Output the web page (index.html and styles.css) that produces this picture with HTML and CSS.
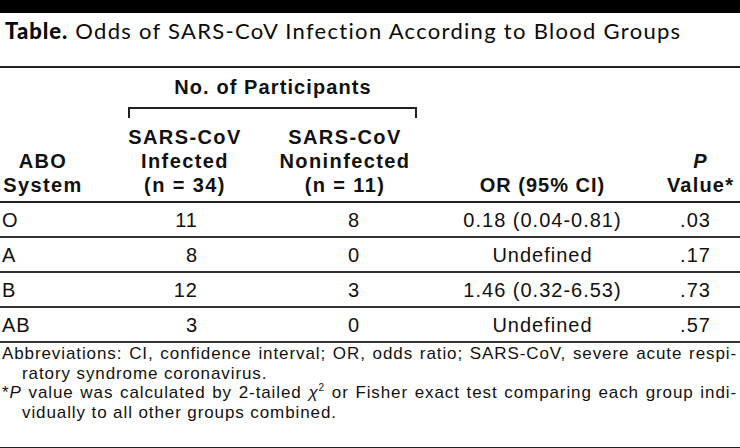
FILE: index.html
```html
<!DOCTYPE html>
<html lang="en">
<head>
<meta charset="utf-8">
<title>Table</title>
<link rel="stylesheet" href="styles.css">
</head>
<body>
<div class="page">
  <div class="topbar"></div>
  <h1 class="title"><b class="title-label">Table.</b> Odds of SARS-CoV Infection According to Blood Groups</h1>
  <table class="data">
    <colgroup>
      <col class="c1"><col class="c2"><col class="c3"><col class="c4"><col class="c5">
    </colgroup>
    <thead>
      <tr class="group-row">
        <th></th>
        <th colspan="2" class="group-cell">
          <div class="group-label">No. of Participants</div>
          <div class="bracket"></div>
        </th>
        <th></th>
        <th></th>
      </tr>
      <tr class="head-row">
        <th class="h-abo">ABO<br>System</th>
        <th class="h-mid">SARS-CoV<br>Infected<br>(n = 34)</th>
        <th class="h-mid">SARS-CoV<br>Noninfected<br>(n = 11)</th>
        <th class="h-or">OR (95% CI)</th>
        <th class="h-p"><i>P</i><br>Value*</th>
      </tr>
    </thead>
    <tbody>
      <tr><td class="d-abo">O</td><td class="d-inf">11</td><td class="d-non">8</td><td class="d-or">0.18 (0.04-0.81)</td><td class="d-p">.03</td></tr>
      <tr><td class="d-abo">A</td><td class="d-inf">8</td><td class="d-non">0</td><td class="d-or">Undefined</td><td class="d-p">.17</td></tr>
      <tr><td class="d-abo">B</td><td class="d-inf">12</td><td class="d-non">3</td><td class="d-or">1.46 (0.32-6.53)</td><td class="d-p">.73</td></tr>
      <tr><td class="d-abo">AB</td><td class="d-inf">3</td><td class="d-non">0</td><td class="d-or">Undefined</td><td class="d-p">.57</td></tr>
    </tbody>
  </table>
  <div class="notes">
    <p class="note">
      <span class="line first">Abbreviations: CI, confidence interval; OR, odds ratio; SARS-CoV, severe acute respi-</span>
      <span class="line">ratory syndrome coronavirus.</span>
    </p>
    <p class="note">
      <span class="line first">*<i>P</i> value was calculated by 2-tailed <i>χ</i><sup class="sq">2</sup> or Fisher exact test comparing each group indi-</span>
      <span class="line">vidually to all other groups combined.</span>
    </p>
  </div>
</div>
</body>
</html>
```

FILE: styles.css
```css
html, body {
  margin: 0;
  padding: 0;
  background: #fff;
}

.page {
  width: 740px;
  height: 448px;
  overflow: hidden;
  color: #111;
  font-family: "Liberation Sans", Arial, sans-serif;
}

.topbar {
  height: 13px;
  background: #000;
}

.title {
  margin: 0;
  box-sizing: border-box;
  height: 55px;
  padding: 5px 0 0 5px;
  border-bottom: 2px solid #222;
  font-family: Lato, "Open Sans", sans-serif;
  font-weight: 400;
  font-size: 22px;
  line-height: 26px;
  letter-spacing: 1.3px;
  color: #0a0a0a;
}

.title-label {
  font-weight: 900;
  letter-spacing: 1px;
}

.data {
  width: 740px;
  border-collapse: collapse;
  table-layout: fixed;
}

.c1 { width: 120px; }
.c2 { width: 130px; }
.c3 { width: 190px; }
.c4 { width: 205px; }
.c5 { width: 95px; }

.data th {
  padding: 0;
  font-weight: 700;
  font-size: 20px;
  line-height: 24px;
  letter-spacing: 1.4px;
  text-align: center;
  vertical-align: bottom;
}

.data .group-cell {
  padding-top: 7px;
}

.group-label {
  letter-spacing: 1.1px;
  padding-right: 14px;
}

.bracket {
  margin: 8px 23px 0 8px;
  height: 9px;
  border: 2px solid #222;
  border-bottom: 0;
}

.data .head-row th {
  padding-top: 7px;
  padding-bottom: 4px;
  border-bottom: 2px solid #222;
}

.data .head-row .h-abo {
  padding-right: 34px;
}

.data .head-row .h-or {
  letter-spacing: 1px;
}

.data .head-row .h-p {
  padding-left: 16px;
  letter-spacing: 1.2px;
}

.data td {
  height: 33px;
  padding: 0;
  font-size: 20px;
  line-height: 24px;
  letter-spacing: 1px;
  border-bottom: 2px solid #333;
  vertical-align: middle;
}

.data .d-abo {
  text-align: left;
  padding-left: 2px;
}

.data .d-inf {
  text-align: right;
  padding-right: 52px;
}

.data .d-non {
  text-align: right;
  padding-right: 80px;
}

.data .d-or {
  text-align: center;
}

.data .d-p {
  text-align: center;
  padding-left: 6px;
}

.notes {
  box-sizing: border-box;
  height: 106px;
  padding: 1px 3px 0 2px;
  border-bottom: 2px solid #222;
  font-size: 17px;
  line-height: 19.5px;
  letter-spacing: 0.9px;
}

.note {
  margin: 0;
}

.line {
  display: block;
  padding-left: 20px;
}

.line.first {
  padding-left: 0;
  text-align: justify;
  text-align-last: justify;
}

.sq {
  font-size: 10px;
  line-height: 0;
  vertical-align: 7px;
}
```
